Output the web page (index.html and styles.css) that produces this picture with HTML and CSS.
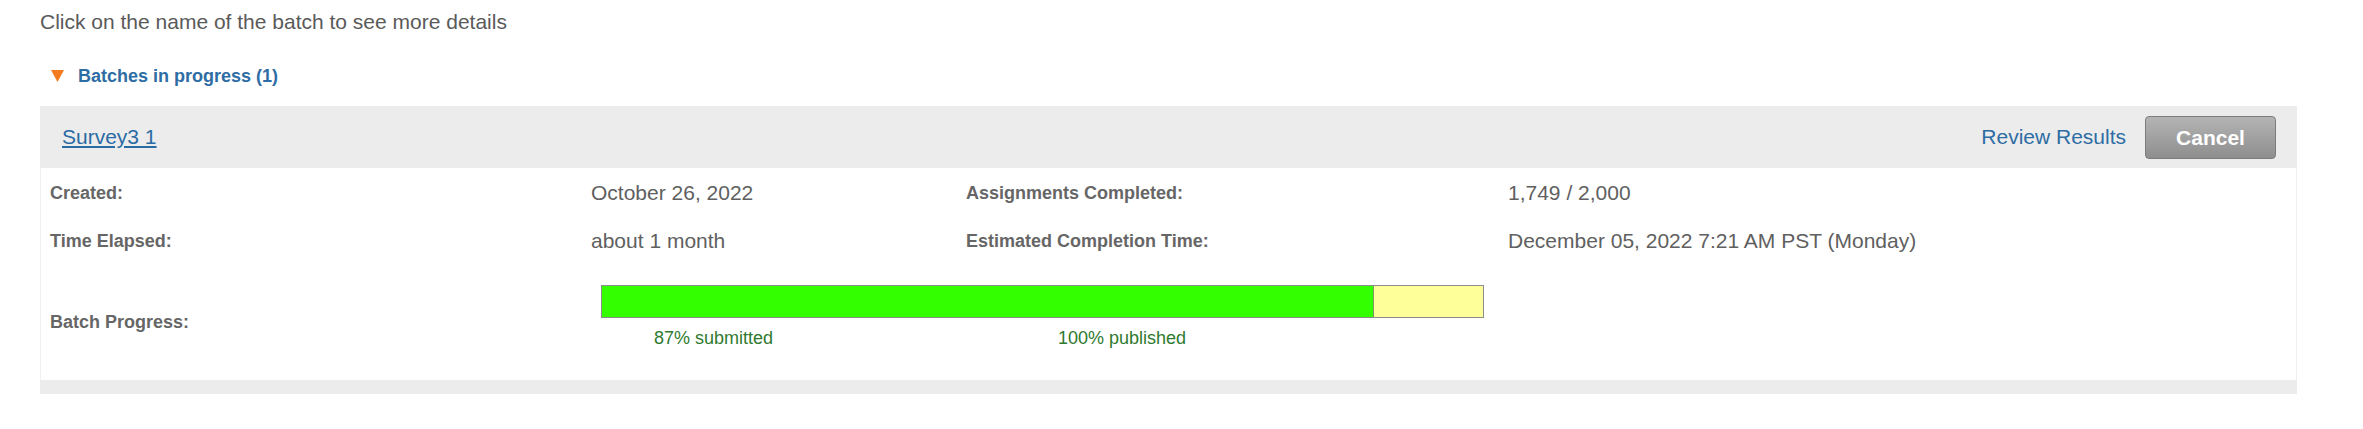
FILE: index.html
```html
<!DOCTYPE html>
<html lang="en">
<head>
<meta charset="utf-8">
<title>Batches</title>
<link rel="stylesheet" href="styles.css">
</head>
<body>
<div class="page">
  <p class="intro">Click on the name of the batch to see more details</p>
  <div class="section-title">
    <svg class="caret" width="13" height="12" viewBox="0 0 13 12"><polygon points="0,0 13,0 6.5,12" fill="#f47b20"/></svg>
    <span>Batches in progress (1)</span>
  </div>
  <div class="batch">
    <div class="batch-head">
      <a class="batch-name" href="#">Survey3 1</a>
      <div class="actions">
        <a class="review" href="#">Review Results</a>
        <button class="cancel" type="button">Cancel</button>
      </div>
    </div>
    <div class="batch-body">
      <div class="row">
        <div class="label">Created:</div>
        <div class="value">October 26, 2022</div>
        <div class="label">Assignments Completed:</div>
        <div class="value">1,749 / 2,000</div>
      </div>
      <div class="row">
        <div class="label">Time Elapsed:</div>
        <div class="value">about 1 month</div>
        <div class="label">Estimated Completion Time:</div>
        <div class="value">December 05, 2022 7:21 AM PST (Monday)</div>
      </div>
      <div class="row row-progress">
        <div class="label">Batch Progress:</div>
        <div class="progress">
          <div class="bar"><div class="bar-fill" style="width: 87.6%"></div></div>
          <div class="bar-labels">
            <span class="submitted">87% submitted</span>
            <span class="published">100% published</span>
          </div>
        </div>
      </div>
    </div>
    <div class="batch-foot"></div>
  </div>
</div>
</body>
</html>
```
FILE: styles.css
```css
html, body {
  margin: 0;
  padding: 0;
  background: #ffffff;
}
body {
  font-family: "Liberation Sans", Arial, Helvetica, sans-serif;
  color: #555555;
}
.page {
  padding: 10px 0 0 40px;
}
.intro {
  margin: 0;
  font-size: 21px;
  line-height: 24px;
  color: #5a5a5a;
}
.section-title {
  display: flex;
  align-items: center;
  height: 24px;
  margin: 30px 0 18px 11px;
  font-size: 18px;
  font-weight: bold;
  color: #2e6da4;
}
.caret {
  display: block;
  margin-right: 14px;
}
.batch {
  width: 2257px;
  background: #ececec;
}
.batch-head {
  height: 62px;
  display: flex;
  align-items: center;
  justify-content: space-between;
  padding: 0 21px 0 22px;
}
.batch-name {
  font-size: 21px;
  color: #2a6aa5;
  text-decoration: underline;
}
.actions {
  display: flex;
  align-items: center;
  gap: 19px;
}
.review {
  font-size: 21px;
  color: #2e6da4;
  text-decoration: none;
}
.cancel {
  width: 131px;
  height: 43px;
  border: 1px solid #7c7c7c;
  border-radius: 4px;
  background: linear-gradient(#b4b4b4, #8e8e8e);
  color: #ffffff;
  font-family: "Liberation Sans", Arial, sans-serif;
  font-size: 21px;
  font-weight: bold;
  padding: 0;
  margin-top: 1px;
}
.batch-body {
  background: #ffffff;
  border-left: 1px solid #f0f0f0;
  border-right: 1px solid #f0f0f0;
  padding-top: 1px;
}
.row {
  display: grid;
  grid-template-columns: 541px 375px 542px 1fr;
  align-items: center;
  height: 48px;
  padding-left: 9px;
}
.row-progress {
  height: 115px;
  grid-template-columns: 541px 1fr;
}
.label {
  font-size: 18px;
  font-weight: bold;
  color: #666666;
}
.value {
  font-size: 21px;
  color: #606060;
}
.progress {
  align-self: start;
  padding-top: 20px;
  padding-left: 10px;
}
.bar {
  width: 881px;
  height: 31px;
  border: 1px solid #8c8c8c;
  background: #ffff99;
}
.bar-fill {
  height: 100%;
  background: #33ff00;
  border-right: 1px solid #7a9a60;
  box-sizing: border-box;
}
.bar-labels {
  display: flex;
  margin-top: 10px;
  font-size: 18px;
  line-height: 20px;
  color: #2f7a2f;
}
.submitted {
  margin-left: 53px;
  width: 404px;
}
.batch-foot {
  height: 14px;
}
```
